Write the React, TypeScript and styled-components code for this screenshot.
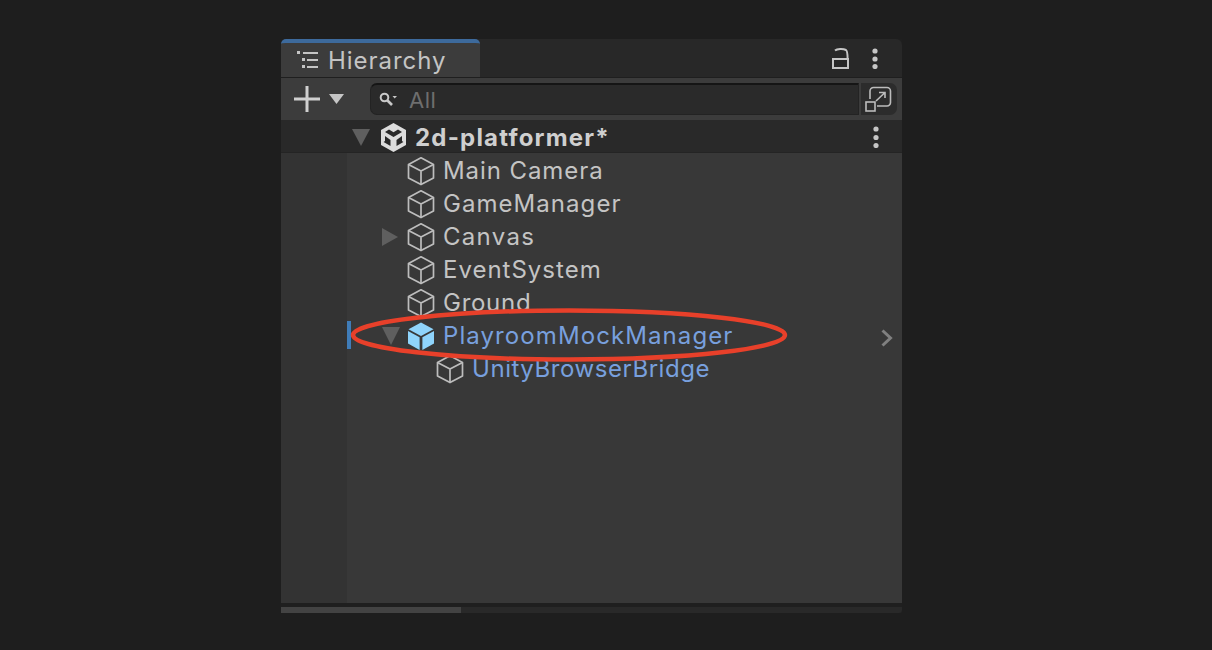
import React from "react";
import styled, { createGlobalStyle } from "styled-components";

const Global = createGlobalStyle`
  html, body { margin: 0; padding: 0; background: #1e1e1e; }
  #root { width: 1212px; height: 650px; overflow: hidden; }
`;

const Page = styled.div`
  width: 1212px;
  height: 650px;
  background: #1e1e1e;
  padding: 39px 0 0 281px;
  box-sizing: border-box;
  font-family: Inter, "Liberation Sans", sans-serif;
`;

const Panel = styled.div`
  position: relative;
  width: 621px;
  height: 574px;
  display: flex;
  flex-direction: column;
  background: #1f1f1f;
`;

const TabBar = styled.div`
  height: 38px;
  display: flex;
  align-items: stretch;
  justify-content: space-between;
  background: #282828;
  border-radius: 6px 6px 0 0;
  padding-right: 24px;
  box-sizing: border-box;
  flex: none;
`;

const Tab = styled.div`
  width: 199px;
  box-sizing: border-box;
  background: #3c3c3c;
  border-top: 4px solid #3d6a9c;
  border-radius: 5px 5px 0 0;
  display: flex;
  align-items: center;
  gap: 9px;
  padding-left: 16px;
  color: #c4c4c4;
  font-size: 24px;
  letter-spacing: 0.95px;
`;

const TabActions = styled.div`
  display: flex;
  align-items: center;
  gap: 22px;
`;

const Toolbar = styled.div`
  height: 42px;
  margin-top: 1px;
  flex: none;
  background: #3c3c3c;
  display: flex;
  align-items: center;
  padding: 0 5px 0 13px;
  box-sizing: border-box;
`;

const AddButton = styled.div`
  display: flex;
  align-items: center;
  gap: 9px;
  width: 76px;
  flex: none;
`;

const SearchBox = styled.div`
  width: 489px;
  height: 32px;
  flex: none;
  box-sizing: border-box;
  background: #2a2a2a;
  border: 1px solid #232323;
  border-top: 2px solid #151515;
  border-radius: 7px 0 0 7px;
  display: flex;
  align-items: center;
  gap: 12px;
  padding-left: 8px;
  color: #6e6e6e;
  font-size: 22px;
  letter-spacing: 0.5px;
`;

const ScaleButton = styled.div`
  width: 36px;
  height: 32px;
  margin-left: 2px;
  flex: none;
  background: #2c2c2c;
  border-radius: 0 7px 7px 0;
  display: flex;
  align-items: center;
  justify-content: center;
`;

const SceneHeader = styled.div`
  height: 32px;
  box-sizing: border-box;
  padding: 2px 23px 0 70px;
  flex: none;
  background: #292929;
  display: flex;
  align-items: center;
  color: #cfcfcf;
  font-size: 24px;
  font-weight: 700;
  letter-spacing: 1.2px;
`;

const HeaderRule = styled.div`
  height: 1px;
  flex: none;
  background: #242424;
`;

const SceneName = styled.span`
  margin-left: 9px;
  flex: 1;
  display: flex;
  align-items: center;
  gap: 8px;
`;

const Body = styled.div`
  flex: 1;
  display: flex;
  min-height: 0;
`;

const Gutter = styled.div`
  width: 66px;
  flex: none;
  background: #333333;
`;

const Tree = styled.div`
  flex: 1;
  background: #383838;
  padding-top: 1px;
  display: flex;
  flex-direction: column;
`;

const Row = styled.div<{ $depth: number }>`
  position: relative;
  height: 33px;
  flex: none;
  display: flex;
  align-items: center;
  padding-left: ${(p) => 59 + p.$depth * 29}px;
`;

const Arrow = styled.span`
  position: absolute;
  display: flex;
  left: 35px;
  top: 8px;
`;

const Marker = styled.span`
  position: absolute;
  left: 0;
  top: 2px;
  width: 4px;
  height: 28px;
  background: #3f7cb8;
`;

const Chevron = styled.span`
  position: absolute;
  right: 9px;
  top: 10px;
  display: flex;
`;

const Label = styled.span<{ $prefab?: boolean; $tracking: number }>`
  margin-left: 7px;
  font-size: 24px;
  line-height: 33px;
  letter-spacing: ${(p) => p.$tracking}px;
  color: ${(p) => (p.$prefab ? "#78a0de" : "#c4c4c4")};
`;

const FooterGap = styled.div`
  height: 4px;
  flex: none;
  background: #1f1f1f;
`;

const Track = styled.div`
  height: 6px;
  flex: none;
  background: #292929;
  border-radius: 0 0 3px 0;
`;

const Thumb = styled.div`
  width: 180px;
  height: 6px;
  background: #434343;
`;

const Highlight = styled.svg`
  position: absolute;
  left: 54px;
  top: 261px;
  pointer-events: none;
`;

const Cube = ({ prefab }: { prefab?: boolean }) =>
  prefab ? (
    <svg width="30" height="30" viewBox="0 0 30 30" style={{ flex: "none" }}>
      <path d="M15 1.5 27.5 8.2 15 15 2.5 8.2Z" fill="#8fd4fb" />
      <path d="M2 10 13.6 16.3V29L2 22.5Z" fill="#8fd4fb" />
      <path d="M28 10 16.4 16.3V29L28 22.5Z" fill="#8fd4fb" />
    </svg>
  ) : (
    <svg width="30" height="30" viewBox="0 0 30 30" fill="none" stroke="#bdbdbd" strokeWidth="1.7" strokeLinejoin="round" style={{ flex: "none" }}>
      <path d="M15 1.8 27.5 8.4V22L15 28.6 2.5 22V8.4Z" />
      <path d="M2.5 8.4 15 15 27.5 8.4M15 15V28.6" />
    </svg>
  );

const Down = () => (
  <svg width="20" height="18" viewBox="0 0 20 18"><path d="M1 1H19L10 18Z" fill="#5f5f5f" /></svg>
);

const rows = [
  { name: "Main Camera", depth: 0, tracking: 0.92 },
  { name: "GameManager", depth: 0, tracking: 1.05 },
  { name: "Canvas", depth: 0, closed: true, tracking: 1.3 },
  { name: "EventSystem", depth: 0, tracking: 1.0 },
  { name: "Ground", depth: 0, tracking: 0.72 },
  { name: "PlayroomMockManager", depth: 0, prefab: true, root: true, open: true, tracking: 1.09 },
  { name: "UnityBrowserBridge", depth: 1, linked: true, tracking: 0.55 },
];

export default function App() {
  return (
    <Page>
      <Global />
      <Panel>
        <TabBar>
          <Tab>
            <svg width="22" height="18" viewBox="0 0 22 18" fill="#c4c4c4" style={{ flex: "none" }}>
              <rect x="0" y="0" width="3" height="3" />
              <rect x="6" y="1" width="15" height="2" />
              <rect x="5" y="7" width="3" height="3" />
              <rect x="10" y="8" width="11" height="2" />
              <rect x="5" y="14" width="3" height="3" />
              <rect x="10" y="15" width="11" height="2" />
            </svg>
            Hierarchy
          </Tab>
          <TabActions>
            <svg width="18" height="21" viewBox="0 0 18 21" fill="none" stroke="#c6c6c6" strokeWidth="2">
              <rect x="1" y="11" width="15" height="9" />
              <path d="M3 2.5C5 .8 11 .5 14 2c1.5 1 1.6 3 1.6 9" />
            </svg>
            <svg width="6" height="21" viewBox="0 0 6 21" fill="#c6c6c6">
              <circle cx="3" cy="3" r="2.6" /><circle cx="3" cy="11" r="2.6" /><circle cx="3" cy="18.5" r="2.6" />
            </svg>
          </TabActions>
        </TabBar>
        <Toolbar>
          <AddButton>
            <svg width="26" height="26" viewBox="0 0 26 26" fill="#d0d0d0">
              <rect x="11.5" y="0" width="3" height="26" /><rect x="0" y="11.5" width="26" height="3" />
            </svg>
            <svg width="15" height="10" viewBox="0 0 15 10"><path d="M0 0H15L7.5 10Z" fill="#c6c6c6" /></svg>
          </AddButton>
          <SearchBox>
            <svg width="18" height="16" viewBox="0 0 18 16" fill="none" stroke="#c8c8c8" strokeWidth="2" style={{ flex: "none" }}>
              <circle cx="5.5" cy="5.5" r="3.8" />
              <path d="M8.5 8.5 13 13" strokeWidth="2.6" />
              <path d="M13.5 4H18L15.7 6.5Z" fill="#c8c8c8" stroke="none" />
            </svg>
            All
          </SearchBox>
          <ScaleButton>
            <svg width="28" height="26" viewBox="0 0 28 26" fill="none" stroke="#bcbcbc" strokeWidth="1.6">
              <path d="M5 13V5a3.5 3.5 0 0 1 3.5-3.5H22A3.5 3.5 0 0 1 25.5 5v11.5A3.5 3.5 0 0 1 22 20H12" />
              <rect x="1" y="16" width="9" height="9" />
              <path d="M11 15 20 6.5M14 6.5H20V12" />
            </svg>
          </ScaleButton>
        </Toolbar>
        <SceneHeader>
          <Down />
          <SceneName>
            <svg width="27" height="29" viewBox="0 0 27 29" style={{ flex: "none" }}>
              <path
                fillRule="evenodd"
                fill="#dcdcdc"
                d="M13.5 0 26 7V22L13.5 29 1 22V7ZM9 6.5 5 9 13.5 14 22 9 18 6.5 13.5 9.2ZM5 13V18L3.6 19 10.5 23V17ZM22 13 16.5 17V23L23.4 19 22 18Z"
              />
              <path d="M13.5 2.5 13.5 4.5" stroke="#292929" strokeWidth="0" />
            </svg>
            2d-platformer*
          </SceneName>
          <svg width="6" height="22" viewBox="0 0 6 22" fill="#c6c6c6">
            <circle cx="3" cy="3" r="2.6" /><circle cx="3" cy="11.5" r="2.6" /><circle cx="3" cy="19.5" r="2.6" />
          </svg>
        </SceneHeader>
        <HeaderRule />
        <Body>
          <Gutter />
          <Tree>
            {rows.map((r) => (
              <Row key={r.name} $depth={r.depth}>
                {r.root && <Marker />}
                {r.closed && (
                  <Arrow>
                    <svg width="16" height="18" viewBox="0 0 16 18"><path d="M0 0 16 9 0 18Z" fill="#5f5f5f" /></svg>
                  </Arrow>
                )}
                {r.open && (
                  <Arrow>
                    <svg width="18" height="18" viewBox="0 0 18 18"><path d="M0 0H18L9 18Z" fill="#5f5f5f" /></svg>
                  </Arrow>
                )}
                <Cube prefab={r.prefab} />
                <Label $prefab={r.prefab || r.linked} $tracking={r.tracking}>{r.name}</Label>
                {r.root && (
                  <Chevron>
                    <svg width="12" height="18" viewBox="0 0 12 18" fill="none" stroke="#808080" strokeWidth="3">
                      <path d="M1.5 1.5 9.5 9 1.5 16.5" />
                    </svg>
                  </Chevron>
                )}
              </Row>
            ))}
          </Tree>
        </Body>
        <FooterGap />
        <Track><Thumb /></Track>
        <Highlight width="460" height="70" viewBox="0 0 460 70">
          <ellipse cx="234" cy="35" rx="216" ry="24.5" fill="none" stroke="#e8402a" strokeWidth="4.5" />
        </Highlight>
      </Panel>
    </Page>
  );
}
